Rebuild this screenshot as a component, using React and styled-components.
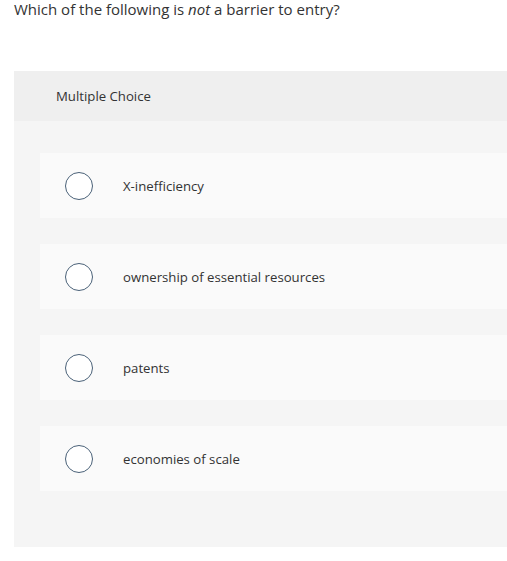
import styled, { createGlobalStyle } from 'styled-components';

const GlobalStyle = createGlobalStyle`
  html, body {
    margin: 0;
    padding: 0;
    background: #ffffff;
    overflow: hidden;
  }
  body {
    font-family: "Open Sans", Lato, Arial, sans-serif;
    color: #333333;
  }
`;

const Page = styled.div`
  padding-left: 14px;
`;

const Question = styled.p`
  margin: 0;
  font-size: 15px;
  line-height: 19px;
  color: #333333;
  em {
    font-style: italic;
  }
`;

const Panel = styled.section`
  margin-top: 52px;
  background: #f5f5f5;
`;

const PanelHeader = styled.div`
  height: 50px;
  display: flex;
  align-items: center;
  padding-left: 42px;
  background: #efefef;
  font-size: 13.2px;
  color: #333333;
`;

const OptionList = styled.div`
  display: flex;
  flex-direction: column;
  gap: 26px;
  padding: 32px 0 56px 26px;
`;

const Option = styled.label`
  height: 65px;
  display: flex;
  align-items: center;
  gap: 30px;
  padding-left: 25px;
  background: #fafafa;
  cursor: pointer;
  font-size: 13.2px;
  color: #333333;
`;

const Radio = styled.span`
  width: 26px;
  height: 26px;
  flex: none;
  border-radius: 50%;
  border: 1.5px solid #4a6178;
  background: #ffffff;
`;

const choices = [
  'X-inefficiency',
  'ownership of essential resources',
  'patents',
  'economies of scale',
];

export default function App() {
  return (
    <Page>
      <GlobalStyle />
      <Question>
        Which of the following is <em>not</em> a barrier to entry?
      </Question>
      <Panel>
        <PanelHeader>Multiple Choice</PanelHeader>
        <OptionList>
          {choices.map((c) => (
            <Option key={c}>
              <Radio />
              {c}
            </Option>
          ))}
        </OptionList>
      </Panel>
    </Page>
  );
}
